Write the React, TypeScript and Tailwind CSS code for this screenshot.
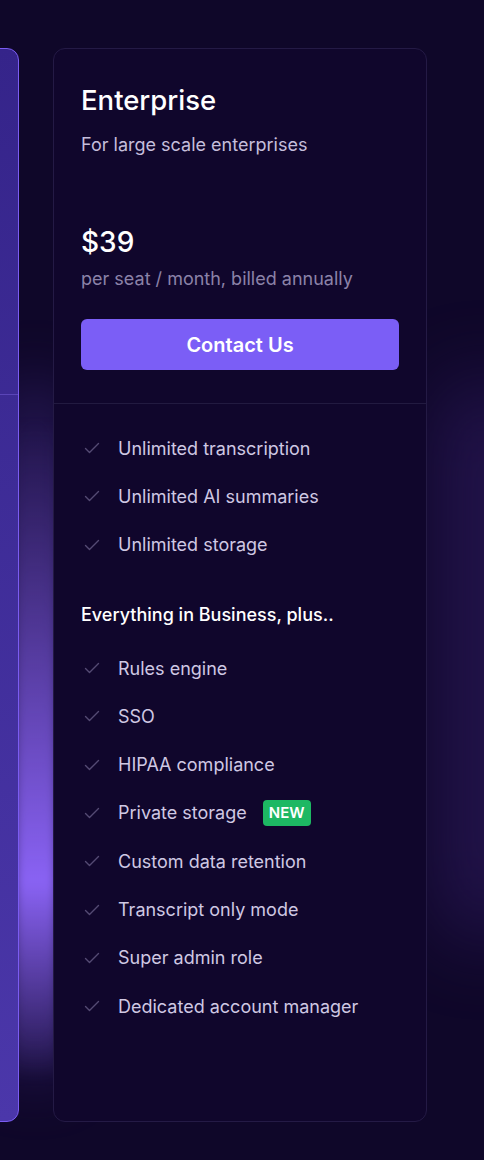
import React from "react";

const base = [
  "Unlimited transcription",
  "Unlimited AI summaries",
  "Unlimited storage",
];

const extras: { label: string; tag?: string }[] = [
  { label: "Rules engine" },
  { label: "SSO" },
  { label: "HIPAA compliance" },
  { label: "Private storage", tag: "NEW" },
  { label: "Custom data retention" },
  { label: "Transcript only mode" },
  { label: "Super admin role" },
  { label: "Dedicated account manager" },
];

function Check() {
  return (
    <svg width="18" height="18" viewBox="0 0 18 18" fill="none" className="shrink-0">
      <path d="M2.5 9.5l4 4 9-9" stroke="#544a73" strokeWidth="1.4" strokeLinecap="round" strokeLinejoin="round" />
    </svg>
  );
}

function Feature({ label, tag }: { label: string; tag?: string }) {
  return (
    <li className="flex items-center h-[48.3px]">
      <Check />
      <span className="ml-[17px] text-[18px] text-[#cfc8e3]">{label}</span>
      {tag && (
        <span className="ml-4 px-[6px] h-[26px] flex items-center rounded-[4px] bg-[#1db863] text-white text-[15px] font-semibold">
          {tag}
        </span>
      )}
    </li>
  );
}

export default function App() {
  return (
    <div
      className="relative w-[484px] h-[1160px] overflow-hidden bg-[#0f0729]"
      style={{ fontFamily: "Inter, 'Noto Sans', sans-serif" }}
    >
      {/* glows */}
      <div className="absolute left-[0px] top-[380px] w-[70px] h-[700px] rounded-full bg-[#34226e] blur-[30px] opacity-60" />
      <div className="absolute left-[14px] top-[420px] w-[44px] h-[660px] blur-[6px] bg-gradient-to-b from-transparent via-[#8a63f4] via-70% to-transparent" />
      <div className="absolute left-[440px] top-[380px] w-[90px] h-[560px] rounded-full bg-[#2a1858] blur-[40px] opacity-80" />

      <div className="relative flex gap-[34px] pt-[48px]">
        {/* featured card, mostly off-screen */}
        <div className="shrink-0 w-[374px] -ml-[355px] h-[1074px] rounded-[12px] border border-[#7b5cf2] bg-gradient-to-b from-[#35248a] to-[#4b37aa] flex flex-col">
          <div className="h-[346px] border-b border-[#5a45b8]" />
        </div>

        {/* enterprise card */}
        <div className="shrink-0 w-[374px] h-[1074px] rounded-[12px] border border-[#241a45] bg-[#10062c] flex flex-col">
          <div className="px-[27px] pt-[32px] pb-[33px] border-b border-[#221a40]">
            <h2 className="text-[27.5px] leading-[38px] font-medium text-white">Enterprise</h2>
            <p className="mt-[13px] text-[18px] leading-[26px] text-[#c5bedb]">For large scale enterprises</p>
            <div className="mt-[65px] text-[28px] leading-[38px] font-medium text-white">$39</div>
            <p className="mt-[4px] text-[18px] leading-[28px] text-[#8b82a8]">per seat / month, billed annually</p>
            <button className="mt-[26px] w-full h-[51px] rounded-[6px] bg-[#7b5ef6] text-white text-[20px] font-semibold">
              Contact Us
            </button>
          </div>
          <div className="px-[29px] pt-[20px]">
            <ul>
              {base.map((b) => (
                <Feature key={b} label={b} />
              ))}
            </ul>
            <h3 className="-ml-[2px] mt-[32px] mb-[15px] text-[18px] leading-[28px] font-medium text-white">Everything in Business, plus..</h3>
            <ul>
              {extras.map((e) => (
                <Feature key={e.label} label={e.label} tag={e.tag} />
              ))}
            </ul>
          </div>
        </div>
      </div>
    </div>
  );
}
